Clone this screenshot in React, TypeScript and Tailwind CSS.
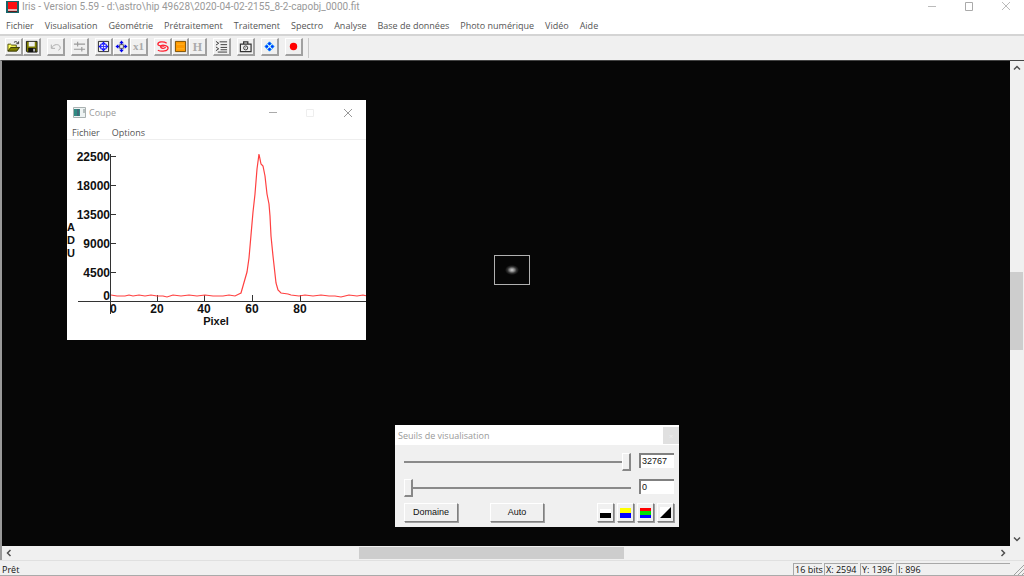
import { useState, type ReactNode } from "react";

const menus = [
	"Fichier",
	"Visualisation",
	"Géométrie",
	"Prétraitement",
	"Traitement",
	"Spectro",
	"Analyse",
	"Base de données",
	"Photo numérique",
	"Vidéo",
	"Aide",
];

const raised =
	"border border-t-white border-l-white border-r-[#808080] border-b-[#808080] bg-[#f0f0f0] shadow-[1px_1px_0_#a0a0a0]";

interface ToolProps {
	label: string;
	children: ReactNode;
}

function Tool({ label, children }: ToolProps) {
	return (
		<button
			aria-label={label}
			className="flex h-[18px] min-w-0 items-center justify-center border-t border-l border-r-2 border-b-2 border-t-white border-l-white border-r-[#a0a0a0] border-b-[#a0a0a0] bg-[#f0f0f0]">
			{children}
		</button>
	);
}

function Icon({ children }: { children: ReactNode }) {
	return (
		<svg viewBox="0 0 14 14" className="h-[13px] w-[13px] shrink-0" fill="none">
			{children}
		</svg>
	);
}

function Toolbar() {
	return (
		<div className="flex h-6 shrink-0 items-start gap-[6px] bg-[#f0f0f0] pt-[2px] pl-[5px]">
			<div className="grid grid-cols-[18px_18px]">
				<Tool label="Ouvrir">
					<Icon>
						<path d="M1 12V4.500h3l1 1h5v2" fill="#ffff60" stroke="#4a4a00" />
						<path d="M1 12l3-4h9.500L10.500 12z" fill="#808000" stroke="#303000" />
						<path d="M7.500 2.500c2-1.500 3.500-.5 4 1M12.500 1.500v2.500H10" stroke="#303030" />
					</Icon>
				</Tool>
				<Tool label="Enregistrer">
					<Icon>
						<path d="M1.500 1.500h11.500v11.500h-10.500l-1-1z" fill="#808000" stroke="#111" />
						<path d="M4 2h6.500v5H4z" fill="#f0f0f0" />
						<path d="M3.500 8.500h8v4.500h-8z" fill="#111" />
						<path d="M9 9.500h1.500v3H9z" fill="#eee" />
					</Icon>
				</Tool>
			</div>
			<div className="grid grid-cols-[18px]">
				<Tool label="Annuler">
					<Icon>
						<path d="M3 8.500c2-4.500 8-4.500 9-1 .5 2-.5 3-2 3.500" stroke="#aaa" />
						<path d="M2.500 5v4h4" stroke="#aaa" />
					</Icon>
				</Tool>
			</div>
			<div className="grid grid-cols-[18px]">
				<Tool label="Seuils">
					<Icon>
						<path d="M1 4.500h12M1 10h12M5 2v5M9.500 7.500v5" stroke="#999" strokeWidth="1.200" />
					</Icon>
				</Tool>
			</div>
			<div className="grid grid-cols-[18px_17px_18px]">
				<Tool label="Ajuster">
					<Icon>
						<path d="M1.500 1.500h11v11h-11z" stroke="#222" />
						<path
							d="M7 1.500l2.500 3h-5zM7 12.500l2.500-3h-5zM1.500 7l3-2.500v5zM12.500 7l-3-2.500v5z"
							fill="#0000ff"
						/>
						<path d="M7 3v8M3 7h8M4 4.500h6v5H4z" stroke="#3030ff" />
					</Icon>
				</Tool>
				<Tool label="Centrer">
					<Icon>
						<path
							d="M7 .5l2.500 3h-5zM7 13.500l2.500-3h-5zM.5 7l3-2.500v5zM13.500 7l-3-2.500v5z"
							fill="#0000ee"
						/>
						<path d="M7 3v2M7 9v2M3 7h2M9 7h2" stroke="#0000ee" strokeWidth="1.500" />
						<path d="M5 5h4v4H5z" stroke="#555" />
					</Icon>
				</Tool>
				<Tool label="Zoom x1">
					<span className="font-['Liberation_Serif',serif] text-[11px] leading-none font-bold text-[#aaa]">
						x1
					</span>
				</Tool>
			</div>
			<div className="grid grid-cols-[18px_17px_18px]">
				<Tool label="Galaxie">
					<Icon>
						<path
							d="M11.500 3.500C8 1 2 2 2 4.500c0 2 4 2 7 2.200"
							stroke="#ff2030"
							strokeWidth="1.400"
						/>
						<path
							d="M2 11c4 2 11 1 11-2.500C13 5.500 5 4.500 5 7c0 2.500 5 2.500 5 .5"
							stroke="#ff2030"
							strokeWidth="1.400"
						/>
					</Icon>
				</Tool>
				<Tool label="Image">
					<Icon>
						<path d="M1.500 1.500h11v11h-11z" fill="#ff9a00" stroke="#704800" />
						<path d="M3 4.500h8M3 9.500h8" stroke="#ffb82a" />
					</Icon>
				</Tool>
				<Tool label="Histogramme">
					<span className="font-['Liberation_Serif',serif] text-[12px] leading-none font-bold text-[#aaa]">
						H
					</span>
				</Tool>
			</div>
			<div className="grid grid-cols-[18px]">
				<Tool label="Commandes">
					<Icon>
						<path d="M5 2h8M6 5h7M6 8h7M6 10.500h7M3 13h10" stroke="#333" />
						<path d="M1 1.500l3 2-3 2M1 7.500l3 2-3 2" stroke="#333" />
					</Icon>
				</Tool>
			</div>
			<div className="grid grid-cols-[18px]">
				<Tool label="Appareil photo">
					<Icon>
						<path d="M1.500 4.500h11.500v8H1.500zM5 4V2h4.500v2" stroke="#333" strokeWidth="1.300" />
						<circle cx="7.200" cy="8.500" r="2.200" stroke="#333" />
						<path d="M6.700 8h1v1h-1z" fill="#333" />
					</Icon>
				</Tool>
			</div>
			<div className="grid grid-cols-[18px]">
				<Tool label="Quatre points">
					<Icon>
						<path
							d="M7 2l2 2-2 2-2-2zM7 8l2 2-2 2-2-2zM4 5l2 2-2 2-2-2zM10 5l2 2-2 2-2-2z"
							fill="#0030ff"
							stroke="#0090ff"
							strokeWidth="1"
						/>
						<path d="M6 6h2v2H6z" fill="#f0f0f0" />
					</Icon>
				</Tool>
			</div>
			<div className="grid grid-cols-[18px]">
				<Tool label="Enregistrement">
					<Icon>
						<circle cx="7" cy="7" r="4" fill="#ff0000" />
					</Icon>
				</Tool>
			</div>
			<div className="-ml-px h-5 w-px bg-[#c8c8c8]" />
		</div>
	);
}

const yTicks = [
	{ y: 17, label: "22500" },
	{ y: 46, label: "18000" },
	{ y: 75, label: "13500" },
	{ y: 104, label: "9000" },
	{ y: 133, label: "4500" },
];

const xTicks = [
	{ x: 91, label: "20" },
	{ x: 138, label: "40" },
	{ x: 186, label: "60" },
	{ x: 234, label: "80" },
];

const profile =
	"44,155 50,156 58,156 62,155 66,156 72,155 78,156 84,155 90,156 96,156 100,157 106,155 114,156 122,155 130,156 138,155 146,156 156,156 162,155 168,156 172,154 174,153 176,146 180,132 182,118 184,95 186,72 188,54 190,29 192,14 194,24 196,26 198,36 200,54 202,64 203,76 204,96 206,116 209,143 211,150 214,153 221,154 224,155 232,156 238,155 246,156 254,155 262,156 268,156 274,157 282,155 290,156 296,155 300,156";

function ProfileChart() {
	return (
		<svg
			viewBox="0 0 299 200"
			className="block w-full font-['Liberation_Sans',sans-serif] text-[12px] font-bold"
			fill="#111">
			<g stroke="#333" shapeRendering="crispEdges">
				<path d="M43.500 14V174M11 161.500H300" />
				{yTicks.map((t) => (
					<path key={t.label} d={`M44 ${t.y - 0.5}h5`} />
				))}
				{xTicks.map((t) => (
					<path key={t.label} d={`M${t.x - 0.5} 155v7`} />
				))}
			</g>
			{yTicks.map((t) => (
				<text key={t.label} x="43" y={t.y + 4} textAnchor="end">
					{t.label}
				</text>
			))}
			<text x="43" y="160" textAnchor="end">0</text>
			<text x="43" y="173">0</text>
			{xTicks.map((t) => (
				<text key={t.label} x={t.x - 1} y="173" textAnchor="middle">
					{t.label}
				</text>
			))}
			<text x="149" y="185" textAnchor="middle" fontSize="11">Pixel</text>
			<g fontSize="11">
				<text x="0" y="91">A</text>
				<text x="0" y="104">D</text>
				<text x="0" y="117">U</text>
			</g>
			<polyline points={profile} fill="none" stroke="#ff4040" strokeWidth="1.200" />
		</svg>
	);
}

function CoupeWindow() {
	return (
		<section className="absolute top-[39px] left-[65px] w-[299px] bg-white">
			<header className="flex h-[25px] items-center pl-[6px] text-[9px] text-[#999]">
				<svg viewBox="0 0 13 11" className="mr-[3px] h-[11px] w-[13px]">
					<path d="M.5.5h12v10H.5z" fill="#eef3f3" stroke="#a8b0b0" />
					<path d="M1 2h6v7H1z" fill="#2f8a82" />
					<path d="M4 2h2v7H4z" fill="#406878" />
					<path d="M11 2v4" stroke="#7a8a8a" />
				</svg>
				<h2 className="flex-1">Coupe</h2>
				<button aria-label="Réduire" className="mr-[27px]">
					<svg viewBox="0 0 10 10" className="h-[10px] w-[10px]">
						<path d="M1 4.500h8" stroke="#aaa" />
					</svg>
				</button>
				<button aria-label="Agrandir" className="mr-[28px]">
					<svg viewBox="0 0 10 10" className="h-[10px] w-[10px]">
						<path d="M1.500 1.500h7v7h-7z" fill="none" stroke="#eee" />
					</svg>
				</button>
				<button aria-label="Fermer" className="mr-[13px]">
					<svg viewBox="0 0 10 10" className="h-[10px] w-[10px]">
						<path d="M1 1l8 8M9 1l-8 8" stroke="#999" />
					</svg>
				</button>
			</header>
			<nav className="flex h-[15px] items-center gap-3 border-b border-[#eee] pt-px pl-[5px] text-[9px] text-[#555]">
				<button>Fichier</button>
				<button>Options</button>
			</nav>
			<ProfileChart />
		</section>
	);
}

interface ThresholdProps {
	label: string;
	value: number;
	onChange: (value: number) => void;
}

function Threshold({ label, value, onChange }: ThresholdProps) {
	return (
		<div className="flex h-[18px] items-start gap-2">
			<input
				type="range"
				min={0}
				max={32767}
				value={value}
				aria-label={label}
				onChange={(e) => onChange(Number(e.target.value))}
				className="h-[18px] min-w-0 flex-1 appearance-none bg-transparent [&::-webkit-slider-runnable-track]:h-[2px] [&::-webkit-slider-runnable-track]:bg-[#8a8a8a] [&::-webkit-slider-thumb]:-mt-2 [&::-webkit-slider-thumb]:h-[18px] [&::-webkit-slider-thumb]:w-[9px] [&::-webkit-slider-thumb]:appearance-none [&::-webkit-slider-thumb]:border [&::-webkit-slider-thumb]:border-t-white [&::-webkit-slider-thumb]:border-r-2 [&::-webkit-slider-thumb]:border-b-2 [&::-webkit-slider-thumb]:border-l-white [&::-webkit-slider-thumb]:border-r-[#888] [&::-webkit-slider-thumb]:border-b-[#888] [&::-webkit-slider-thumb]:bg-[#f0f0f0]"
			/>
			<input
				type="text"
				value={value}
				aria-label={`${label} (valeur)`}
				onChange={(e) => onChange(Number(e.target.value) || 0)}
				className="h-[15px] w-[35px] border-t-2 border-l-2 border-[#808080] bg-white pb-px pl-px font-['Liberation_Sans',sans-serif] text-[9px] text-[#111]"
			/>
		</div>
	);
}

function PaletteButton({ label, children }: ToolProps) {
	return (
		<button aria-label={label} className={`flex h-[19px] w-[17px] items-center justify-center ${raised}`}>
			<svg viewBox="0 0 13 13" className="h-[13px] w-[13px] shrink-0">
				{children}
			</svg>
		</button>
	);
}

function ThresholdWindow() {
	const [high, setHigh] = useState(32767);
	const [low, setLow] = useState(0);

	return (
		<section className="absolute top-[364px] left-[393px] w-[284px] bg-[#f0f0f0]">
			<header className="flex h-5 items-center bg-white pt-px pl-[3px] text-[9px] text-[#999]">
				<h2 className="flex-1">Seuils de visualisation</h2>
				<button
					aria-label="Fermer"
					className="flex h-[17px] w-4 items-center justify-center bg-[#e0e0e0] text-[8px] text-[#eee]">
					×
				</button>
			</header>
			<div className="flex flex-col pt-2 pr-[5px] pb-[5px] pl-[9px]">
				<Threshold label="Seuil haut" value={high} onChange={setHigh} />
				<div className="mt-2">
					<Threshold label="Seuil bas" value={low} onChange={setLow} />
				</div>
				<div className="mt-[6px] flex items-center font-['Liberation_Sans',sans-serif] text-[9px] text-[#111]">
					<button className={`h-[19px] w-[54px] ${raised}`}>Domaine</button>
					<button className={`ml-8 h-[19px] w-[54px] ${raised}`}>Auto</button>
					<div className="ml-auto flex gap-[3px]">
						<PaletteButton label="Noir et blanc">
							<path d="M1 3h11v4H1z" fill="#fff" />
							<path d="M1 7h11v5H1z" fill="#000" />
						</PaletteButton>
						<PaletteButton label="Jaune et bleu">
							<path d="M1 2h11v5H1z" fill="#ffff00" />
							<path d="M1 7h11v5H1z" fill="#0000ff" />
						</PaletteButton>
						<PaletteButton label="Couleurs">
							<path d="M1 2h11v3H1z" fill="#ff0000" />
							<path d="M1 5h11v4H1z" fill="#00e000" />
							<path d="M1 9h11v3H1z" fill="#0000ff" />
						</PaletteButton>
						<PaletteButton label="Dégradé">
							<path d="M1 1h11v11H1z" fill="#fff" />
							<path d="M12 1v11H1z" fill="#000" />
						</PaletteButton>
					</div>
				</div>
			</div>
		</section>
	);
}

function Arrow({ label, d }: { label: string; d: string }) {
	return (
		<button aria-label={label} className="flex h-[14px] w-[14px] shrink-0 items-center justify-center">
			<svg viewBox="0 0 8 8" className="h-2 w-2" fill="none" stroke="#505050" strokeWidth="1.500">
				<path d={d} />
			</svg>
		</button>
	);
}

export default function App() {
	return (
		<div className="flex h-screen flex-col overflow-hidden bg-[#f0f0f0] font-['Open_Sans','Noto_Sans',sans-serif] select-none">
			<header className="flex h-[14px] shrink-0 items-center bg-white pl-[6px] font-['Roboto',sans-serif] text-[10px] leading-none text-[#999]">
				<svg viewBox="0 0 13 13" className="mr-[3px] h-[13px] w-[13px]">
					<path d="M0 0h13v12H0z" fill="#17666a" />
					<path d="M2 1h9v7H2z" fill="#ff1010" />
					<path d="M2 8h9v2H2z" fill="#e8b0b0" />
					<path d="M2 10h9v1H2z" fill="#601818" />
				</svg>
				<h1 className="flex-1 truncate leading-[14px]">
					Iris - Version 5.59 - d:\astro\hip 49628\2020-04-02-2155_8-2-capobj_0000.fit
				</h1>
				<div className="flex gap-[27px] pr-[13px]">
					<button aria-label="Réduire">
						<svg viewBox="0 0 10 10" className="h-[10px] w-[10px]">
							<path d="M1 4.500h8" stroke="#bbb" />
						</svg>
					</button>
					<button aria-label="Agrandir">
						<svg viewBox="0 0 10 10" className="h-[10px] w-[10px]">
							<path d="M1.500 .5h7v8h-7z" fill="none" stroke="#aaa" />
						</svg>
					</button>
					<button aria-label="Fermer">
						<svg viewBox="0 0 10 10" className="h-[10px] w-[10px]">
							<path d="M1 0l8 8M9 0l-8 8" stroke="#bbb" />
						</svg>
					</button>
				</div>
			</header>
			<nav className="flex h-[22px] shrink-0 items-center gap-[11px] border-b-2 border-[#d4d4d4] bg-white pt-[3px] pl-[6px] text-[9px] text-[#555]">
				{menus.map((m) => (
					<button key={m} className="whitespace-nowrap">
						{m}
					</button>
				))}
			</nav>
			<Toolbar />

			<div className="flex min-h-0 flex-1 border-t border-l-2 border-t-[#444] border-l-[#999]">
				<div className="flex min-w-0 flex-1 flex-col">
					<main className="relative min-h-0 flex-1 overflow-hidden bg-[#060606]">
						<CoupeWindow />
						{/* Star selection */}
						<div className="absolute top-[194px] left-[492px] flex h-[30px] w-[36px] items-center justify-center border border-[#b0b0b0]">
							<div className="h-[10px] w-[14px] bg-[radial-gradient(closest-side,#d0d0d0,#888_35%,#333_65%,transparent)]" />
						</div>
						<ThresholdWindow />
					</main>
					<div className="flex h-[14px] shrink-0 items-center">
						<Arrow label="Gauche" d="M5.500 1L2.500 4l3 3" />
						<div className="flex h-3 flex-1">
							<div className="flex-[343]" />
							<div className="flex-[265] bg-[#cdcdcd]" />
							<div className="flex-[372]" />
						</div>
						<Arrow label="Droite" d="M2.500 1l3 3-3 3" />
					</div>
				</div>
				<div className="flex w-[14px] shrink-0 flex-col pb-[14px]">
					<Arrow label="Haut" d="M1 5.500l3-3 3 3" />
					<div className="flex w-[13px] flex-1 flex-col">
						<div className="flex-[197]" />
						<div className="flex-[79] bg-[#cdcdcd]" />
						<div className="flex-[182]" />
					</div>
					<Arrow label="Bas" d="M1 2.500l3 3 3-3" />
				</div>
			</div>

			<footer className="flex h-4 shrink-0 items-end gap-[2px] border-t border-b border-t-[#e0e0e0] border-b-[#aaa] text-[9px] leading-[11px] whitespace-nowrap text-[#111]">
				<span className="flex-1 pl-[2px]">Prêt</span>
				<span className="w-[29px] border-t border-l border-[#a8a8a8] pl-px">16 bits</span>
				<span className="w-[34px] border-t border-l border-[#a8a8a8] pl-px">X: 2594</span>
				<span className="w-[34px] border-t border-l border-[#a8a8a8] pl-px">Y: 1396</span>
				<span className="w-[114px] border-t border-l border-[#a8a8a8] pl-px">I: 896</span>
				<svg viewBox="0 0 12 10" className="h-[10px] w-3" stroke="#a0a0a0">
					<path d="M2 10L12 0M6 10l6-6M10 10l2-2" />
				</svg>
			</footer>
		</div>
	);
}
